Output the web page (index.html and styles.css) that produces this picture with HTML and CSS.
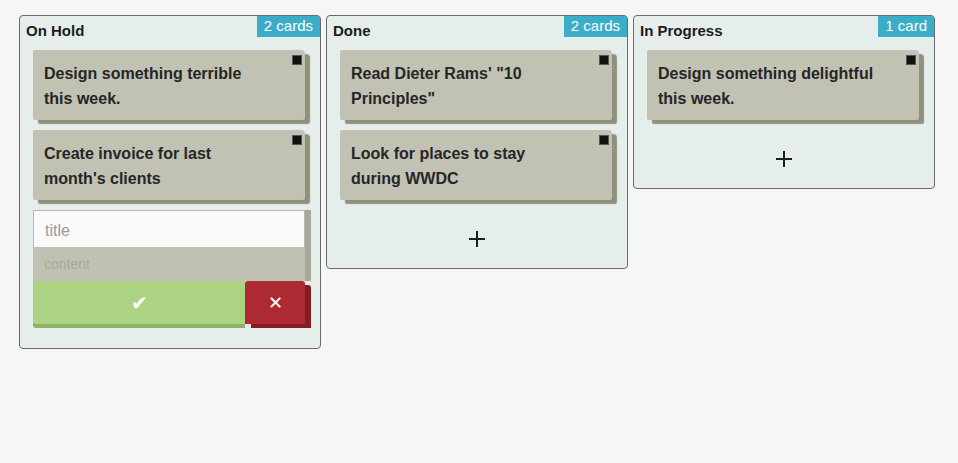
FILE: index.html
```html
<!DOCTYPE html>
<html lang="en">

<head>
    <meta charset="UTF-8">
    <meta name="viewport" content="width=device-width, initial-scale=1.0">
    <title>Kanban</title>
    <link rel="stylesheet" href="styles.css">
</head>

<body>
    <div class="board">
        <section class="column">
            <header class="column-header">
                <h2>On Hold</h2>
                <span class="count">2 cards</span>
            </header>
            <div class="cards">
                <article class="card">
                    <p>Design something terrible this week.</p>
                    <span class="card-toggle"></span>
                </article>
                <article class="card">
                    <p>Create invoice for last month's clients</p>
                    <span class="card-toggle"></span>
                </article>
            </div>
            <form class="new-card">
                <div class="fields">
                    <input class="new-title" type="text" placeholder="title">
                    <textarea class="new-content" placeholder="content"></textarea>
                </div>
                <div class="actions">
                    <button type="submit" class="save">✔</button>
                    <button type="button" class="cancel">✕</button>
                </div>
            </form>
        </section>

        <section class="column">
            <header class="column-header">
                <h2>Done</h2>
                <span class="count">2 cards</span>
            </header>
            <div class="cards">
                <article class="card">
                    <p>Read Dieter Rams' "10 Principles"</p>
                    <span class="card-toggle"></span>
                </article>
                <article class="card">
                    <p>Look for places to stay during WWDC</p>
                    <span class="card-toggle"></span>
                </article>
            </div>
            <button class="add-card" type="button">
                <svg width="18" height="18" viewBox="0 0 18 18"><path d="M9 1v16M1 9h16" stroke="#1e1e1e" stroke-width="2" fill="none"/></svg>
            </button>
        </section>

        <section class="column">
            <header class="column-header">
                <h2>In Progress</h2>
                <span class="count">1 card</span>
            </header>
            <div class="cards">
                <article class="card">
                    <p>Design something delightful this week.</p>
                    <span class="card-toggle"></span>
                </article>
            </div>
            <button class="add-card" type="button">
                <svg width="18" height="18" viewBox="0 0 18 18"><path d="M9 1v16M1 9h16" stroke="#1e1e1e" stroke-width="2" fill="none"/></svg>
            </button>
        </section>
    </div>
</body>

</html>
```

FILE: styles.css
```css
body {
    margin: 0;
    background-color: #f6f6f6;
    font-family: "Liberation Sans", Arial, sans-serif;
    color: #222;
}

.board {
    display: flex;
    align-items: flex-start;
    gap: 5px;
    padding: 15px 19px;
}

.column {
    position: relative;
    width: 302px;
    box-sizing: border-box;
    border: 1px solid #6b6b6b;
    border-radius: 4px;
    background-color: #e5eeeb;
}

.column-header {
    height: 34px;
    box-sizing: border-box;
    padding: 6px 0 0 6px;
}

.column-header h2 {
    margin: 0;
    font-size: 15px;
    line-height: 18px;
    font-weight: bold;
    color: #1c1c1c;
}

.count {
    position: absolute;
    top: 0;
    right: 0;
    height: 21px;
    padding: 0 7px;
    line-height: 20px;
    font-size: 15px;
    color: white;
    background-color: #3badc9;
    border-top-right-radius: 3px;
}

.cards {
    padding: 0 15px 0 13px;
}

.card {
    position: relative;
    background-color: #c1c1b4;
    border-radius: 2px 4px 2px 2px;
    box-shadow: 5px 4px 1px #8f917c;
    padding: 11px 41px 9px 11px;
    margin-bottom: 10px;
}

.card p {
    margin: 0;
    font-size: 16px;
    line-height: 25px;
    font-weight: bold;
    color: #262626;
}

.card-toggle {
    position: absolute;
    top: 5px;
    right: 3px;
    width: 10px;
    height: 10px;
    box-sizing: border-box;
    background-color: #111;
    border: 1px solid #555;
}

.add-card {
    display: flex;
    align-items: center;
    justify-content: center;
    width: 100%;
    height: 58px;
    padding: 0;
    border: none;
    background: none;
    cursor: pointer;
}

.new-card {
    margin: 2px 15px 24px 13px;
}

.fields {
    display: flex;
    flex-direction: column;
    box-shadow: 6px 0 0 #a6a899;
}

.new-title {
    height: 37px;
    box-sizing: border-box;
    margin: 0;
    padding: 3px 11px 0;
    border: 1px solid #b8b8b8;
    border-bottom: none;
    background-color: #fafafa;
    font-family: inherit;
    font-size: 16px;
    color: #222;
    outline: none;
}

.new-title::placeholder {
    color: #9a9a9a;
}

.new-content {
    height: 34px;
    box-sizing: border-box;
    margin: 0;
    padding: 9px 11px;
    border: none;
    resize: none;
    background-color: #c0c0b3;
    font-family: inherit;
    font-size: 14px;
    line-height: 16px;
    outline: none;
}

.new-content::placeholder {
    color: #a9a99e;
}

.actions {
    display: flex;
    height: 43px;
}

.actions button {
    border: none;
    color: white;
    cursor: pointer;
    padding: 0;
}

.save {
    flex: 1;
    font-size: 20px;
    background-color: #acd384;
    box-shadow: 0 4px 0 #8db36a;
    border-radius: 0 0 0 3px;
}

.cancel {
    width: 60px;
    font-size: 18px;
    background-color: #ad2a35;
    box-shadow: 6px 4px 0 #861c24;
    border-radius: 3px 3px 0 0;
}
```
